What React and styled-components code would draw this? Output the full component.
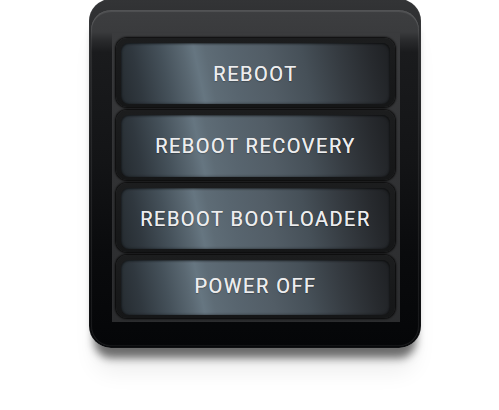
import React from "react";
import styled, { createGlobalStyle } from "styled-components";

const Global = createGlobalStyle`
  html, body { margin: 0; padding: 0; background: #ffffff; }
  body { font-family: Roboto, "Noto Sans", "Liberation Sans", sans-serif; }
`;

const Stage = styled.div`
  width: 499px;
  height: 410px;
  padding-left: 89px;
  box-sizing: border-box;
  overflow: hidden;
`;

const Shell = styled.div`
  width: 332px;
  height: 349px;
  margin-top: -1px;
  box-sizing: border-box;
  border-radius: 22px;
  padding: 11px 2px 2px 2px;
  display: flex;
  background: linear-gradient(180deg, #333436 0%, #2a2b2d 15%, #18191b 45%, #0a0b0d 80%, #08090b 100%);
  box-shadow:
    0 15px 9px -5px rgba(0, 0, 0, 0.55),
    0 30px 24px -8px rgba(0, 0, 0, 0.08),
    inset 0 0 0 1px rgba(255, 255, 255, 0.03);
`;

const Bezel = styled.div`
  flex: 1;
  border-radius: 20px;
  padding: 23px 19px 24px 21px;
  display: flex;
  background: linear-gradient(180deg, #3d3e40 0px, #3a3b3d 22px, #2a2b2d 30px, #1a1b1d 42px, #131416 45%, #0a0b0d 72%, #050608 100%);
  box-shadow:
    inset 0 2px 1px rgba(255, 255, 255, 0.1),
    inset 1px 0 1px rgba(255, 255, 255, 0.08),
    inset -1px 0 1px rgba(255, 255, 255, 0.08),
    inset 0 -1px 1px rgba(255, 255, 255, 0.06);
`;

const Screen = styled.div`
  flex: 1;
  display: flex;
  flex-direction: column;
  gap: 3px;
  padding: 5px 5px 4px 4px;
  background: linear-gradient(180deg, #3a3b3d 0%, #323335 40%, #2b2c2e 100%);
`;

const ButtonShell = styled.div`
  height: ${(p) => p.$h}px;
  box-sizing: border-box;
  flex: none;
  border-radius: 11px;
  padding: 5px 5px 3px 5px;
  display: flex;
  background: linear-gradient(180deg, #1c1d1e 0%, #151617 100%);
  box-shadow: 0 0 2px 1px #050505;
`;

const Face = styled.div`
  flex: 1;
  border-radius: 8px;
  display: flex;
  align-items: center;
  justify-content: center;
  background: linear-gradient(
    78deg,
    #252b30 0%,
    #30383f 8%,
    #45515a 18%,
    #5a6872 26%,
    #667681 30%,
    #5e6c76 34%,
    #58656f 42%,
    #525d66 55%,
    #465058 68%,
    #363c42 80%,
    #272a2e 92%,
    #1e2023 100%
  );
  box-shadow:
    inset 0 0 3px rgba(0, 0, 0, 0.55),
    inset 0 1px 2px rgba(0, 0, 0, 0.4);
  color: #ededee;
  font-family: Roboto, "Noto Sans", "Liberation Sans", sans-serif;
  font-size: 20px;
  font-weight: 400;
  letter-spacing: 1.5px;
  text-shadow: 0 0 0.4px rgba(237, 237, 238, 0.8), 0 1px 1px rgba(0, 0, 0, 0.25);
  padding-bottom: ${(p) => p.$pb || 0}px;
`;

const items = [
  { label: "REBOOT", h: 69 },
  { label: "REBOOT RECOVERY", h: 70 },
  { label: "REBOOT BOOTLOADER", h: 69 },
  { label: "POWER OFF", h: 63, pb: 3 },
];

export default function App() {
  return (
    <>
      <Global />
      <Stage>
        <Shell>
          <Bezel>
            <Screen>
              {items.map((it) => (
                <ButtonShell key={it.label} $h={it.h}>
                  <Face $pb={it.pb}>{it.label}</Face>
                </ButtonShell>
              ))}
            </Screen>
          </Bezel>
        </Shell>
      </Stage>
    </>
  );
}
